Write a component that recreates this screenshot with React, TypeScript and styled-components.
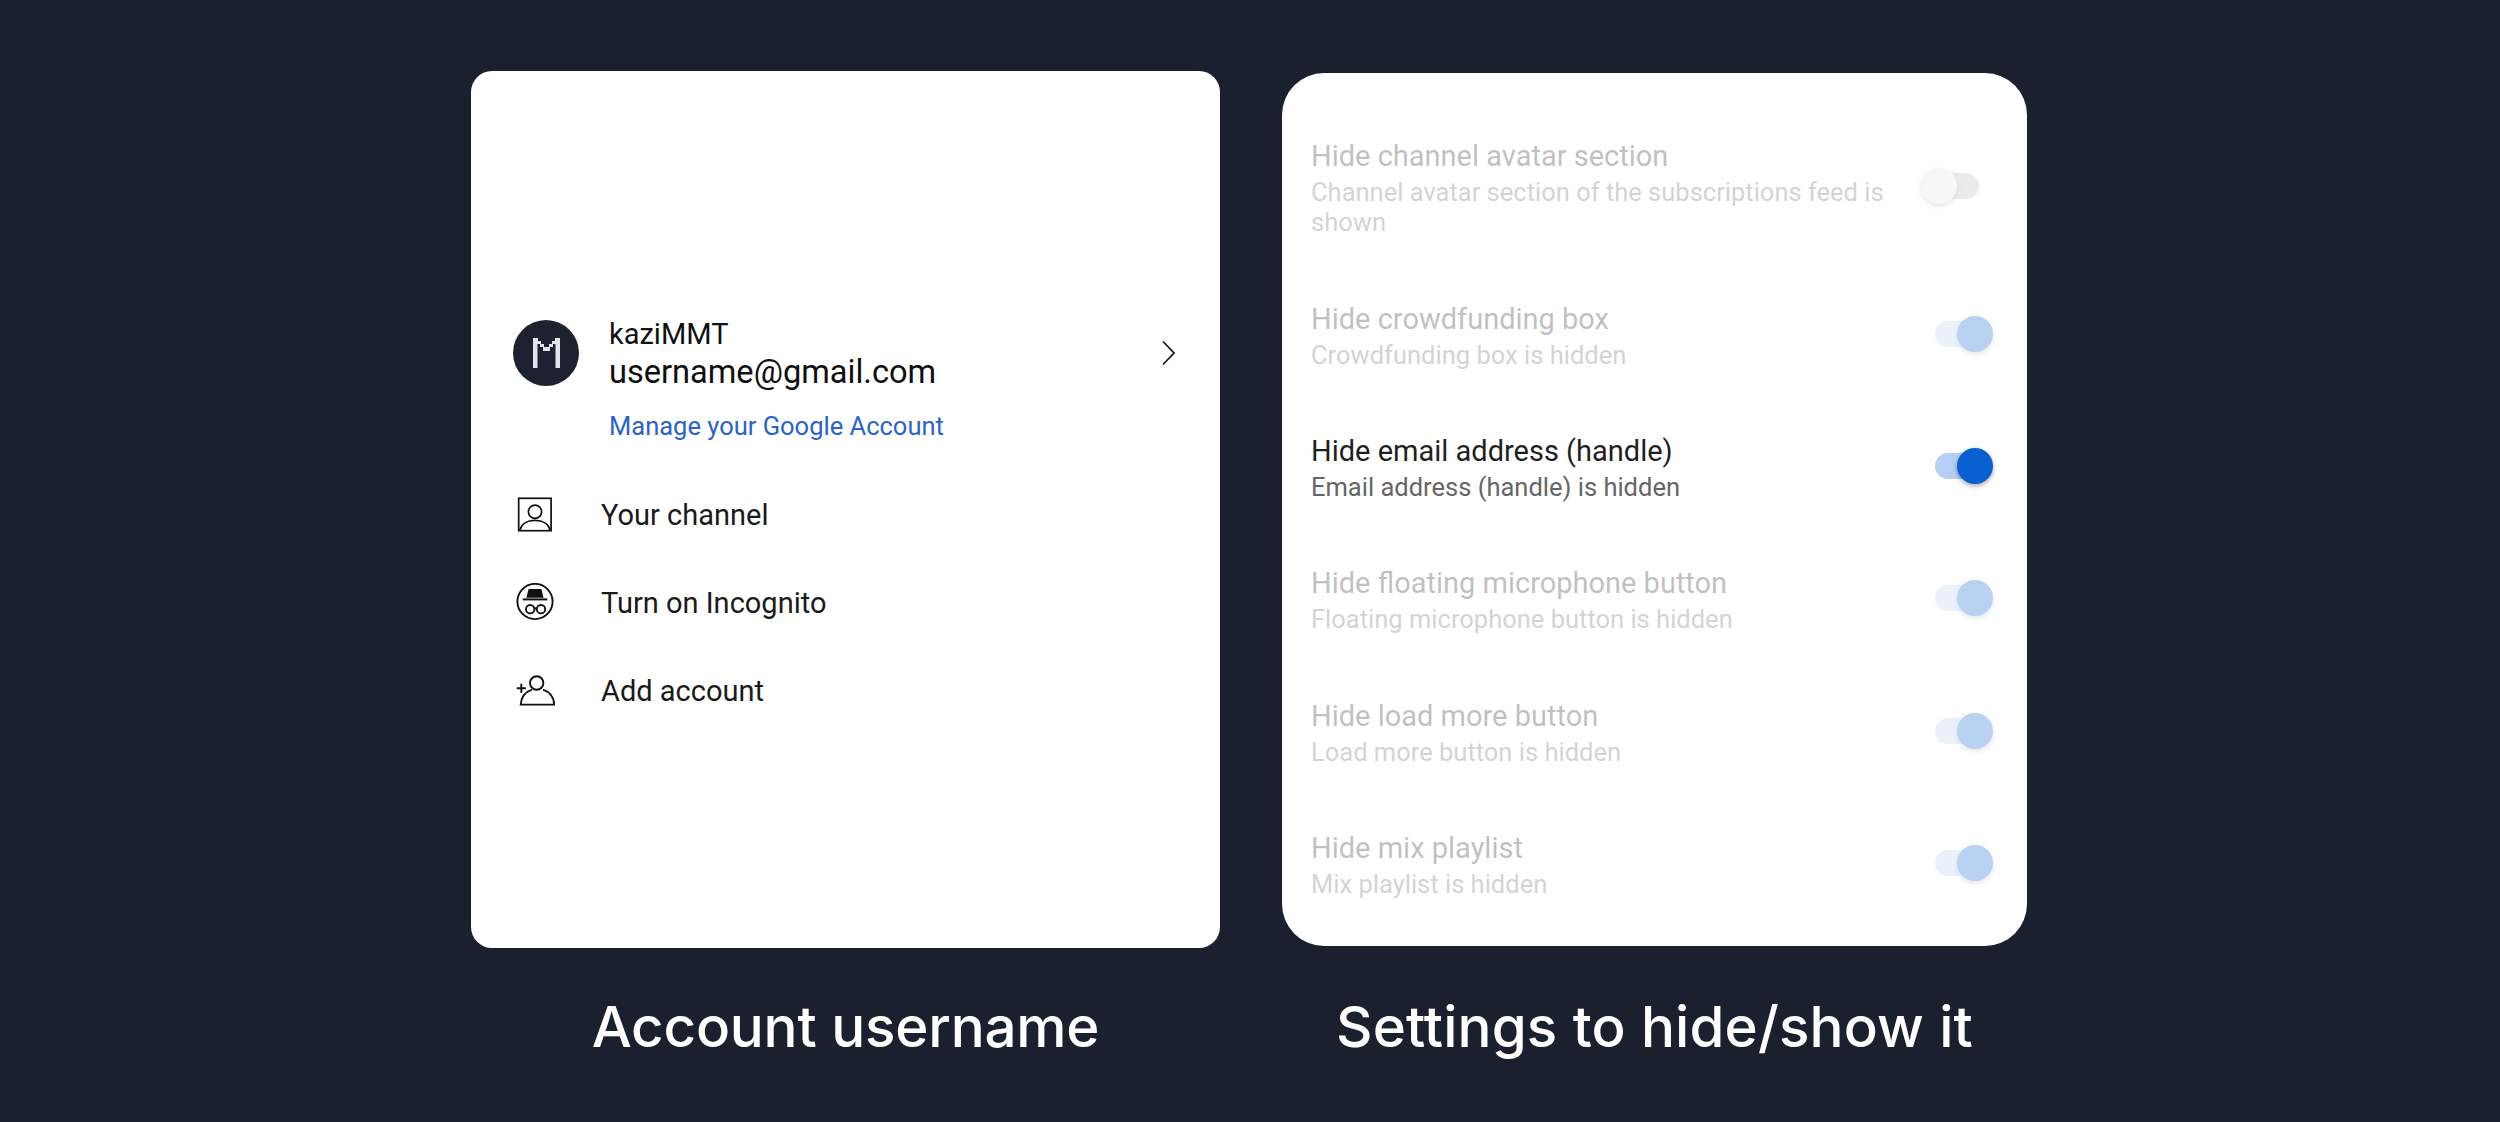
import React from "react";
import styled, { createGlobalStyle } from "styled-components";

const Global = createGlobalStyle`
  html, body { margin: 0; padding: 0; background: #1b202e; }
  body { width: 2500px; height: 1122px; overflow: hidden; font-family: Roboto, "Liberation Sans", sans-serif; }
`;

const Page = styled.div`
  width: 2500px;
  height: 1122px;
  padding: 71px 0 0 471px;
  box-sizing: border-box;
  display: grid;
  grid-template-columns: 749px 745px;
  grid-template-rows: 877px auto;
  column-gap: 62px;
  row-gap: 44px;
  align-items: start;
`;

const AccountCard = styled.section`
  height: 877px;
  background: #fff;
  border-radius: 21px;
  padding: 244.5px 39px 0 42px;
  box-sizing: border-box;
`;

const SettingsCard = styled.section`
  height: 873px;
  margin-top: 2px;
  background: #fff;
  border-radius: 42px;
  padding: 32px 34px 0 29px;
  box-sizing: border-box;
  overflow: hidden;
`;

const Caption = styled.div<{ $tracking: number }>`
  color: #fff;
  font-family: Inter, "Noto Sans", sans-serif;
  font-size: 56.5px;
  font-weight: 500;
  letter-spacing: ${(p) => p.$tracking}px;
  line-height: 70px;
  text-align: center;
`;

const Profile = styled.div`
  display: grid;
  grid-template-columns: 66px 1fr 24px;
  column-gap: 30px;
  align-items: center;
`;

const Avatar = styled.div`
  width: 66px;
  height: 66px;
  border-radius: 50%;
  background: #1e2230;
  display: flex;
  align-items: center;
  justify-content: center;
`;

const Names = styled.div`
  display: flex;
  flex-direction: column;
`;

const Handle = styled.span`
  font-size: 29px;
  line-height: 37px;
  color: #111;
`;

const Email = styled.span`
  font-size: 32.6px;
  line-height: 38px;
  color: #0f0f0f;
`;

const ManageLink = styled.a`
  display: block;
  margin: 19.5px 0 0 96px;
  font-size: 25.5px;
  line-height: 32px;
  color: #2a62d0;
`;

const Menu = styled.div`
  margin-top: 29px;
  display: flex;
  flex-direction: column;
`;

const MenuRow = styled.div`
  height: 88px;
  display: grid;
  grid-template-columns: 40px 1fr;
  column-gap: 46px;
  align-items: center;
  margin-left: 2px;
  font-size: 29px;
  color: #1a1a1a;
`;

const Row = styled.div<{ $dim: boolean }>`
  display: flex;
  align-items: center;
  justify-content: space-between;
  padding: 30.2px 0;
  opacity: ${(p) => (p.$dim ? 0.28 : 1)};
`;

const RowText = styled.div`
  width: 590px;
  display: flex;
  flex-direction: column;
`;

const RowTitle = styled.span`
  font-size: 29px;
  line-height: 42px;
  color: #1f1f1f;
`;

const RowSub = styled.span`
  font-size: 25.5px;
  line-height: 30px;
  color: #666;
`;

const Toggle = styled.div<{ $on: boolean }>`
  position: relative;
  flex: none;
  width: 58px;
  height: 36px;
  margin-right: ${(p) => (p.$on ? 0 : 14)}px;
`;

const Track = styled.div<{ $on: boolean }>`
  position: absolute;
  top: 5px;
  left: ${(p) => (p.$on ? 0 : 8)}px;
  right: ${(p) => (p.$on ? 8 : 0)}px;
  height: 26px;
  border-radius: 13px;
  background: ${(p) => (p.$on ? "#b5d0f4" : "#b8b8b8")};
`;

const Knob = styled.div<{ $on: boolean }>`
  position: absolute;
  top: 0;
  left: ${(p) => (p.$on ? 22 : 0)}px;
  width: 36px;
  height: 36px;
  border-radius: 50%;
  background: ${(p) => (p.$on ? "#0860d0" : "#e4e4e4")};
  box-shadow: 0 2px 5px rgba(0, 0, 0, 0.35);
`;

const stroke = { fill: "none", stroke: "#111", strokeWidth: 1.7 };

const ChannelIcon = () => (
  <svg width="40" height="40" viewBox="0 0 40 40" {...stroke}>
    <rect x="3.7" y="3.3" width="32.4" height="32.4" />
    <circle cx="20" cy="16.8" r="6.6" />
    <path d="M5 35c1.3-6.2 7.2-9.6 15-9.6s13.7 3.4 15 9.6" />
  </svg>
);

const IncognitoIcon = () => (
  <svg width="40" height="40" viewBox="0 0 40 40" {...stroke}>
    <circle cx="20" cy="18.5" r="17.6" strokeWidth="1.9" />
    <path d="M13.6 6h12.8l2.2 8.7H11.4z" fill="#111" stroke="none" />
    <path d="M7.7 16.4h24.6" strokeWidth="2" />
    <circle cx="15.2" cy="26.2" r="4.2" strokeWidth="1.9" />
    <circle cx="26" cy="26.2" r="4.2" strokeWidth="1.9" />
    <path d="M19.2 25.6c.9-.5 1.9-.5 2.8 0" strokeWidth="1.9" />
  </svg>
);

const AddAccountIcon = () => (
  <svg width="40" height="40" viewBox="0 0 40 40" {...stroke} strokeWidth="1.9">
    <circle cx="21.7" cy="12" r="6.7" />
    <path d="M17 18.6C11 20.6 6.3 26 5.7 33.6h33.6c-.6-7.6-5.3-13-11.3-15" />
    <path d="M1.8 17.3h9M6.3 12.8v9" />
  </svg>
);

const LogoM = () => (
  <svg width="27" height="30" viewBox="0 0 27 30">
    <path
      d="M0 0H5V3H8V6H11V9H16V6H19V3H22V0H27V30H22.5V6H20V9H17V13H10V9H7V6H4.5V30H0Z"
      fill="#e2e4ec"
    />
  </svg>
);

const Chevron = () => (
  <svg width="24" height="28" viewBox="0 0 24 28" fill="none" stroke="#111" strokeWidth="1.7">
    <path d="M6 2.5 17 14 6 25.5" />
  </svg>
);

const menu = [
  { icon: <ChannelIcon />, label: "Your channel" },
  { icon: <IncognitoIcon />, label: "Turn on Incognito" },
  { icon: <AddAccountIcon />, label: "Add account" },
];

const settings = [
  { title: "Hide channel avatar section", sub: "Channel avatar section of the subscriptions feed is shown", on: false, dim: true },
  { title: "Hide crowdfunding box", sub: "Crowdfunding box is hidden", on: true, dim: true },
  { title: "Hide email address (handle)", sub: "Email address (handle) is hidden", on: true, dim: false },
  { title: "Hide floating microphone button", sub: "Floating microphone button is hidden", on: true, dim: true },
  { title: "Hide load more button", sub: "Load more button is hidden", on: true, dim: true },
  { title: "Hide mix playlist", sub: "Mix playlist is hidden", on: true, dim: true },
];

export default function App() {
  return (
    <>
      <Global />
      <Page>
        <AccountCard>
          <Profile>
            <Avatar><LogoM /></Avatar>
            <Names>
              <Handle>kaziMMT</Handle>
              <Email>username@gmail.com</Email>
            </Names>
            <Chevron />
          </Profile>
          <ManageLink>Manage your Google Account</ManageLink>
          <Menu>
            {menu.map((m) => (
              <MenuRow key={m.label}>
                {m.icon}
                <span>{m.label}</span>
              </MenuRow>
            ))}
          </Menu>
        </AccountCard>
        <SettingsCard>
          {settings.map((s) => (
            <Row key={s.title} $dim={s.dim}>
              <RowText>
                <RowTitle>{s.title}</RowTitle>
                <RowSub>{s.sub}</RowSub>
              </RowText>
              <Toggle $on={s.on}>
                <Track $on={s.on} />
                <Knob $on={s.on} />
              </Toggle>
            </Row>
          ))}
        </SettingsCard>
        <Caption $tracking={-0.2}>Account username</Caption>
        <Caption $tracking={0.15}>Settings to hide/show it</Caption>
      </Page>
    </>
  );
}
